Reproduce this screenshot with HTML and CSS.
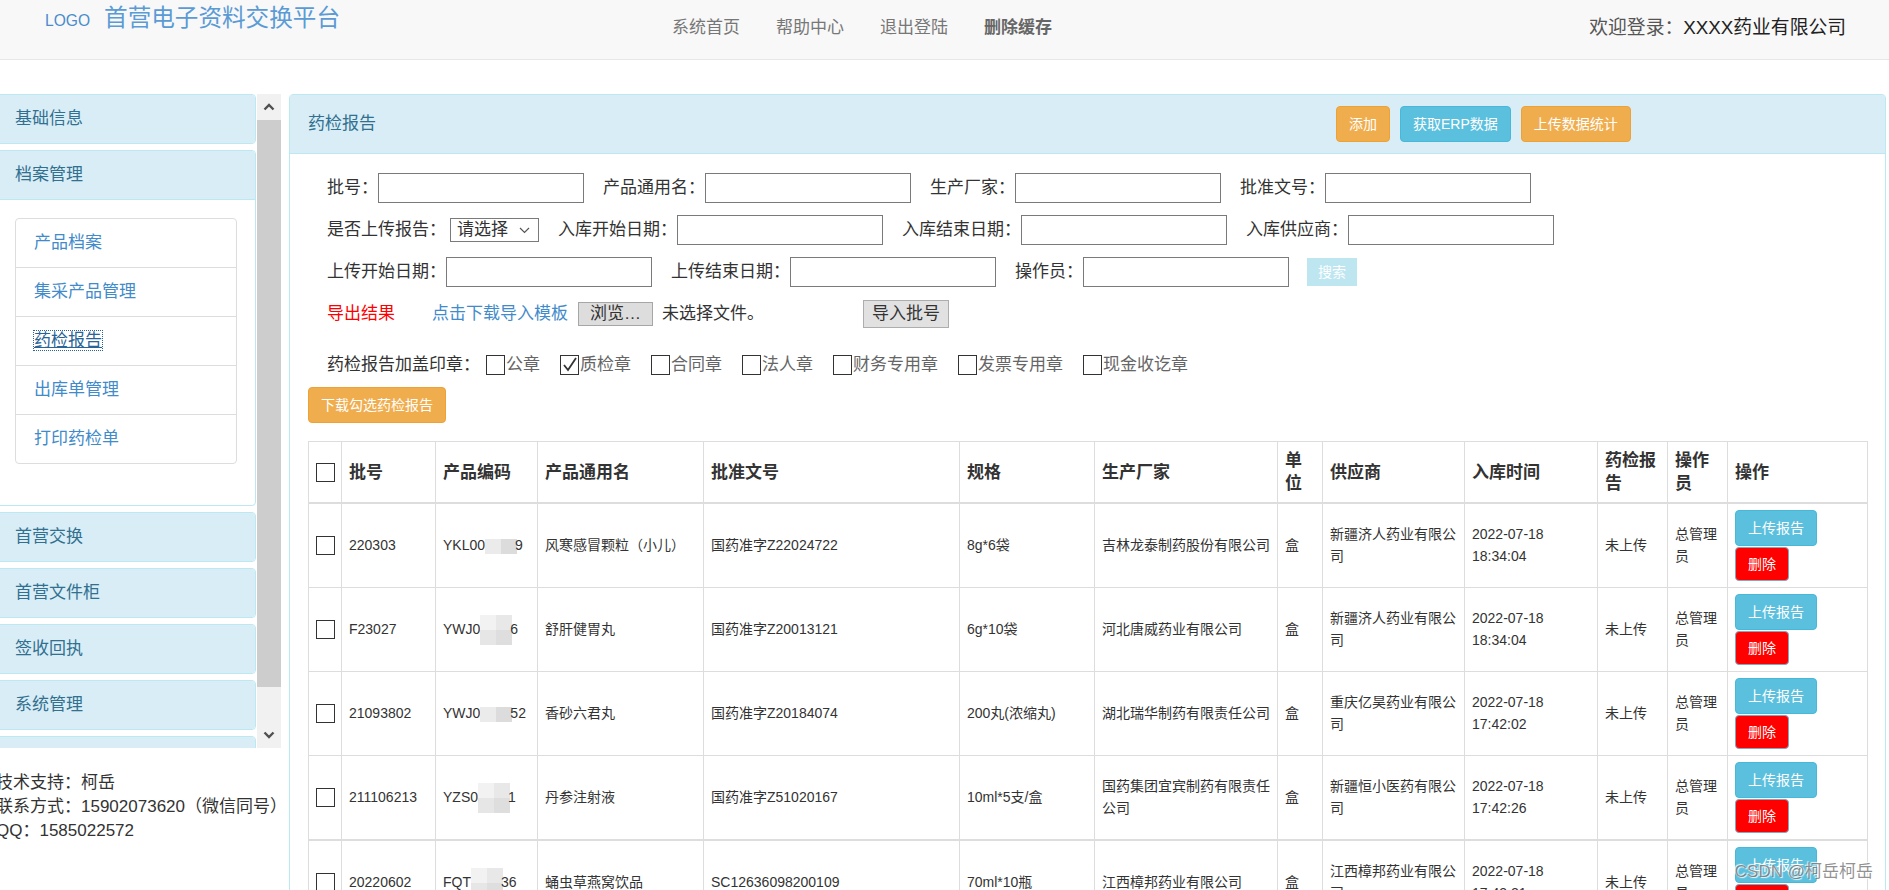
FILE: index.html
```html
<!DOCTYPE html>
<html lang="zh-CN">
<head>
<meta charset="utf-8">
<title>药检报告</title>
<link rel="stylesheet" href="styles.css">
</head>
<body>
<header class="topbar">
  <div class="brand"><span class="logo">LOGO</span><span class="site-title">首营电子资料交换平台</span></div>
  <nav class="topnav">
    <a class="topnav-link">系统首页</a>
    <a class="topnav-link">帮助中心</a>
    <a class="topnav-link">退出登陆</a>
    <a class="topnav-link topnav-strong">删除缓存</a>
  </nav>
  <div class="welcome"><span class="welcome-label">欢迎登录：</span>XXXX药业有限公司</div>
</header>

<div class="layout">
  <aside class="sidebar">
    <div class="side-scroll">
      <div class="side-panels">
        <div class="spanel"><div class="spanel-head">基础信息</div></div>
        <div class="spanel">
          <div class="spanel-head">档案管理</div>
          <div class="spanel-body">
            <ul class="list-group">
              <li class="list-item">产品档案</li>
              <li class="list-item">集采产品管理</li>
              <li class="list-item list-item-active"><span class="active-link">药检报告</span></li>
              <li class="list-item">出库单管理</li>
              <li class="list-item">打印药检单</li>
            </ul>
          </div>
        </div>
        <div class="spanel"><div class="spanel-head">首营交换</div></div>
        <div class="spanel"><div class="spanel-head">首营文件柜</div></div>
        <div class="spanel"><div class="spanel-head">签收回执</div></div>
        <div class="spanel"><div class="spanel-head">系统管理</div></div>
        <div class="spanel"><div class="spanel-head">&nbsp;</div></div>
      </div>
      <div class="scrollbar">
        <div class="sb-btn"><svg width="12" height="8" viewBox="0 0 12 8"><path d="M1.5 6.5 L6 2 L10.5 6.5" fill="none" stroke="#505050" stroke-width="2.4"/></svg></div>
        <div class="sb-thumb"></div>
        <div class="sb-track"></div>
        <div class="sb-btn"><svg width="12" height="8" viewBox="0 0 12 8"><path d="M1.5 1.5 L6 6 L10.5 1.5" fill="none" stroke="#505050" stroke-width="2.4"/></svg></div>
      </div>
    </div>
    <div class="side-foot">
      <p class="foot-line">技术支持：柯岳</p>
      <p class="foot-line">联系方式：15902073620（微信同号）</p>
      <p class="foot-line">QQ：1585022572</p>
    </div>
  </aside>

  <main class="panel">
    <div class="panel-head">
      <h3 class="panel-title">药检报告</h3>
      <div class="head-actions">
        <button class="btn btn-warning">添加</button>
        <button class="btn btn-info">获取ERP数据</button>
        <button class="btn btn-warning">上传数据统计</button>
      </div>
    </div>
    <div class="panel-body">
      <div class="frow">
        <span class="flabel">批号：</span><span class="finput"></span>
        <span class="flabel">产品通用名：</span><span class="finput"></span>
        <span class="flabel">生产厂家：</span><span class="finput"></span>
        <span class="flabel">批准文号：</span><span class="finput"></span>
      </div>
      <div class="frow">
        <span class="flabel">是否上传报告：</span>
        <span class="fselect"><span class="fselect-text">请选择</span><svg class="fselect-arrow" width="11" height="7" viewBox="0 0 11 7"><path d="M1 1 L5.5 5.5 L10 1" fill="none" stroke="#555" stroke-width="1.2"/></svg></span>
        <span class="flabel">入库开始日期：</span><span class="finput"></span>
        <span class="flabel">入库结束日期：</span><span class="finput"></span>
        <span class="flabel">入库供应商：</span><span class="finput"></span>
      </div>
      <div class="frow">
        <span class="flabel">上传开始日期：</span><span class="finput"></span>
        <span class="flabel">上传结束日期：</span><span class="finput"></span>
        <span class="flabel">操作员：</span><span class="finput finput-last"></span>
        <button class="btn btn-search">搜索</button>
      </div>
      <div class="frow frow-tools">
        <a class="export-link">导出结果</a>
        <a class="template-link">点击下载导入模板</a>
        <span class="file-btn">浏览…</span>
        <span class="file-none">未选择文件。</span>
        <span class="import-btn">导入批号</span>
      </div>
      <div class="frow frow-stamps">
        <span class="flabel">药检报告加盖印章：</span>
        <span class="stamp stamp-first"><span class="cbox"></span>公章</span>
        <span class="stamp"><span class="cbox"><svg width="17" height="18" viewBox="0 0 17 18"><path d="M3 9 L7 14 L15 2" fill="none" stroke="#333" stroke-width="1.8"/></svg></span>质检章</span>
        <span class="stamp"><span class="cbox"></span>合同章</span>
        <span class="stamp"><span class="cbox"></span>法人章</span>
        <span class="stamp"><span class="cbox"></span>财务专用章</span>
        <span class="stamp"><span class="cbox"></span>发票专用章</span>
        <span class="stamp"><span class="cbox"></span>现金收讫章</span>
      </div>
      <div class="download-row">
        <button class="btn btn-warning btn-download">下载勾选药检报告</button>
      </div>

      <table class="report-table">
        <colgroup>
          <col class="c-check"><col class="c-batch"><col class="c-code"><col class="c-name"><col class="c-approval"><col class="c-spec"><col class="c-maker"><col class="c-unit"><col class="c-supplier"><col class="c-time"><col class="c-report"><col class="c-operator"><col class="c-action">
        </colgroup>
        <thead>
          <tr>
            <th><span class="tbox"></span></th>
            <th>批号</th><th>产品编码</th><th>产品通用名</th><th>批准文号</th><th>规格</th><th>生产厂家</th><th>单位</th><th>供应商</th><th>入库时间</th><th>药检报告</th><th>操作员</th><th>操作</th>
          </tr>
        </thead>
        <tbody>
          <tr>
            <td><span class="tbox"></span></td>
            <td>220303</td>
            <td>YKL00<span class="mosaic m1"><i></i><i></i></span>9</td>
            <td>风寒感冒颗粒（小儿）</td>
            <td>国药准字Z22024722</td>
            <td>8g*6袋</td>
            <td>吉林龙泰制药股份有限公司</td>
            <td>盒</td>
            <td>新疆济人药业有限公司</td>
            <td>2022-07-18 18:34:04</td>
            <td>未上传</td>
            <td>总管理员</td>
            <td><div class="ops"><button class="btn btn-info btn-upload">上传报告</button><button class="btn btn-del">删除</button></div></td>
          </tr>
          <tr>
            <td><span class="tbox"></span></td>
            <td>F23027</td>
            <td>YWJ0<span class="mosaic m2"><i></i><i></i><i></i><i></i></span>6</td>
            <td>舒肝健胃丸</td>
            <td>国药准字Z20013121</td>
            <td>6g*10袋</td>
            <td>河北唐威药业有限公司</td>
            <td>盒</td>
            <td>新疆济人药业有限公司</td>
            <td>2022-07-18 18:34:04</td>
            <td>未上传</td>
            <td>总管理员</td>
            <td><div class="ops"><button class="btn btn-info btn-upload">上传报告</button><button class="btn btn-del">删除</button></div></td>
          </tr>
          <tr>
            <td><span class="tbox"></span></td>
            <td>21093802</td>
            <td>YWJ0<span class="mosaic m1"><i></i><i></i></span>52</td>
            <td>香砂六君丸</td>
            <td>国药准字Z20184074</td>
            <td>200丸(浓缩丸)</td>
            <td>湖北瑞华制药有限责任公司</td>
            <td>盒</td>
            <td>重庆亿昊药业有限公司</td>
            <td>2022-07-18 17:42:02</td>
            <td>未上传</td>
            <td>总管理员</td>
            <td><div class="ops"><button class="btn btn-info btn-upload">上传报告</button><button class="btn btn-del">删除</button></div></td>
          </tr>
          <tr>
            <td><span class="tbox"></span></td>
            <td>211106213</td>
            <td>YZS0<span class="mosaic m2"><i></i><i></i><i></i><i></i></span>1</td>
            <td>丹参注射液</td>
            <td>国药准字Z51020167</td>
            <td>10ml*5支/盒</td>
            <td>国药集团宜宾制药有限责任公司</td>
            <td>盒</td>
            <td>新疆恒小医药有限公司</td>
            <td>2022-07-18 17:42:26</td>
            <td>未上传</td>
            <td>总管理员</td>
            <td><div class="ops"><button class="btn btn-info btn-upload">上传报告</button><button class="btn btn-del">删除</button></div></td>
          </tr>
          <tr class="row-split">
            <td><span class="tbox"></span></td>
            <td>20220602</td>
            <td>FQT<span class="mosaic m2"><i></i><i></i><i></i><i></i></span>36</td>
            <td>蛹虫草燕窝饮品</td>
            <td>SC12636098200109</td>
            <td>70ml*10瓶</td>
            <td>江西樟邦药业有限公司</td>
            <td>盒</td>
            <td>江西樟邦药业有限公司</td>
            <td>2022-07-18 17:43:21</td>
            <td>未上传</td>
            <td>总管理员</td>
            <td><div class="ops"><button class="btn btn-info btn-upload">上传报告</button><button class="btn btn-del">删除</button></div></td>
          </tr>
        </tbody>
      </table>
    </div>
  </main>
</div>

<div class="watermark">CSDN @柯岳柯岳</div>
</body>
</html>
```

FILE: styles.css
```css
* { box-sizing: border-box; }

html, body {
  margin: 0;
  height: 100%;
  overflow: hidden;
}

body {
  position: relative;
  font-family: "Liberation Sans", "Noto Sans CJK SC", sans-serif;
  font-size: 17px;
  line-height: 24px;
  color: #333;
  background: #fff;
}

/* ---------- top bar ---------- */
.topbar {
  display: flex;
  height: 60px;
  background: #f8f8f8;
  border-bottom: 1px solid #e7e7e7;
}

.brand {
  flex: 0 0 654px;
  display: flex;
  align-items: baseline;
  padding: 1px 0 0 45px;
  line-height: 30px;
  height: 32px;
}

.logo {
  font-size: 15.6px;
  color: #4a8ccc;
  margin-right: 14px;
}

.site-title {
  font-family: "Noto Sans CJK SC", sans-serif;
  font-size: 23.6px;
  color: #5b9bd5;
}

.topnav {
  display: flex;
  align-self: flex-start;
  margin-top: 16px;
}

.topnav-link {
  padding: 0 18px;
  color: #777;
  text-decoration: none;
}

.topnav-strong {
  font-weight: bold;
  color: #666;
}

.welcome {
  margin-left: auto;
  align-self: flex-start;
  margin-top: 16px;
  padding-right: 43px;
  font-size: 18.8px;
  color: #222;
}

.welcome-label { color: #555; }

/* ---------- layout ---------- */
.layout {
  display: flex;
  align-items: flex-start;
  margin-top: 34px;
}

.sidebar {
  flex: 0 0 285px;
  width: 285px;
  min-width: 0;
  margin-left: -4px;
}

.side-scroll {
  display: flex;
  height: 654px;
}

.side-panels {
  width: 261px;
  height: 654px;
  overflow: hidden;
}

.spanel {
  width: 260px;
  border: 1px solid #bce8f1;
  border-radius: 4px;
  margin-bottom: 6px;
  background: #fff;
  overflow: hidden;
}

.spanel-head {
  height: 48px;
  display: flex;
  align-items: center;
  padding: 0 18px;
  background: #d9edf7;
  color: #31708f;
}

.spanel-body {
  border-top: 1px solid #bce8f1;
  padding: 18px 18px 17px;
}

.list-group {
  list-style: none;
  margin: 0 0 24px;
  padding: 0;
}

.list-item {
  padding: 12px 18px;
  border: 1px solid #ddd;
  margin-bottom: -1px;
  color: #428bca;
}

.list-item:first-child { border-radius: 4px 4px 0 0; }
.list-item:last-child { border-radius: 0 0 4px 4px; margin-bottom: 0; }

.active-link {
  color: #2a6496;
  text-decoration: underline;
  outline: 1px dotted #2a6496;
}

.scrollbar {
  flex: 0 0 24px;
  width: 24px;
  display: flex;
  flex-direction: column;
}

.sb-btn {
  height: 26px;
  background: #f1f1f1;
  display: flex;
  align-items: center;
  justify-content: center;
}

.sb-thumb {
  height: 567px;
  background: #cdcdcd;
}

.sb-track {
  height: 35px;
  background: #f1f1f1;
}

.side-foot {
  margin-top: 23px;
}

.foot-line {
  margin: 0;
  line-height: 24px;
  white-space: nowrap;
}

/* ---------- main panel ---------- */
.panel {
  flex: 1;
  min-width: 0;
  margin-left: 8px;
  margin-right: 3px;
  border: 1px solid #bce8f1;
  border-radius: 4px;
  min-height: 900px;
}

.panel-head {
  display: flex;
  align-items: center;
  height: 59px;
  padding: 0 18px;
  background: #d9edf7;
  border-bottom: 1px solid #bce8f1;
}

.panel-title {
  flex: 0 0 1028px;
  margin: 0;
  font-size: 17px;
  font-weight: normal;
  color: #31708f;
}

.head-actions {
  display: flex;
  gap: 10px;
}

.btn {
  font-family: "Liberation Sans", "Noto Sans CJK SC", sans-serif;
  font-size: 14px;
  line-height: 20px;
  height: 36px;
  padding: 0 12px;
  border: 1px solid transparent;
  border-radius: 4px;
  color: #fff;
  cursor: pointer;
}

.btn-warning { background: #f0ad4e; border-color: #eea236; }
.btn-info { background: #5bc0de; border-color: #46b8da; }

.panel-body {
  padding: 19px 18px 18px;
}

.frow {
  display: flex;
  align-items: center;
  height: 30px;
  margin-bottom: 12px;
  padding-left: 19px;
  white-space: nowrap;
}

.flabel { color: #333; }

.finput {
  width: 206px;
  height: 30px;
  margin-right: 19px;
  border: 1px solid #7a7a7a;
  background: #fff;
}

.finput-last { margin-right: 18px; }

.fselect {
  display: flex;
  align-items: center;
  justify-content: space-between;
  width: 89px;
  height: 24px;
  margin: 0 19px 0 4px;
  padding: 0 8px 0 6px;
  border: 1px solid #7a7a7a;
}

.fselect-arrow { flex: none; }

.btn-search {
  height: 28px;
  padding: 0 10px;
  background: #bde6f1;
  border-color: #bde6f1;
  border-radius: 0;
}

.frow-tools { margin-bottom: 21px; }

.export-link { color: #ff0000; margin-right: 37px; }
.template-link { color: #428bca; margin-right: 10px; }

.file-btn {
  height: 24px;
  line-height: 22px;
  padding: 0 11px;
  background: #dddddd;
  border: 1px solid #a6a6a6;
  margin-right: 9px;
}

.file-none { margin-right: 99px; }

.import-btn {
  height: 28px;
  line-height: 26px;
  padding: 0 8px;
  background: #e1e1e1;
  border: 1px solid #adadad;
}

.frow-stamps { margin-bottom: 7px; }

.stamp {
  display: flex;
  align-items: center;
  margin-left: 20px;
  color: #666;
}

.stamp-first { margin-left: 6px; }

.cbox {
  width: 19px;
  height: 20px;
  margin-right: 1px;
  border: 1px solid #333;
  background: #fff;
  display: flex;
  align-items: center;
  justify-content: center;
}

.download-row { margin-bottom: 18px; }

/* ---------- table ---------- */
.report-table {
  width: 100%;
  table-layout: fixed;
  border-collapse: collapse;
  border: 1px solid #ddd;
}

.c-check { width: 33px; }
.c-batch { width: 94px; }
.c-code { width: 102px; }
.c-name { width: 166px; }
.c-approval { width: 256px; }
.c-spec { width: 135px; }
.c-maker { width: 183px; }
.c-unit { width: 45px; }
.c-supplier { width: 142px; }
.c-time { width: 133px; }
.c-report { width: 70px; }
.c-operator { width: 60px; }
.c-action { width: 140px; }

.report-table th {
  padding: 7px 7px;
  border: 1px solid #ddd;
  border-bottom-width: 2px;
  font-size: 17px;
  line-height: 23px;
  font-weight: bold;
  text-align: left;
  vertical-align: middle;
}

.report-table td {
  padding: 6px 6px 6px 7px;
  border: 1px solid #ddd;
  font-size: 14px;
  line-height: 21.5px;
  vertical-align: middle;
}

.row-split td { border-top: 2px solid #ddd; }

.tbox {
  display: block;
  width: 19px;
  height: 19px;
  border: 1px solid #333;
  background: #fff;
}

.mosaic {
  display: inline-grid;
  grid-template-columns: 16px 16px;
  grid-auto-rows: 15px;
  vertical-align: middle;
  margin: -8px -2px -8px 0;
}

.mosaic i { display: block; }
.m1 i:nth-child(1) { background: #ebebeb; }
.m1 i:nth-child(2) { background: #dcdcdc; }
.m2 i:nth-child(1) { background: #f2f2f2; }
.m2 i:nth-child(2) { background: #e8e8e8; }
.m2 i:nth-child(3) { background: #e6e6e6; }
.m2 i:nth-child(4) { background: #dedede; }

.ops {
  display: flex;
  flex-direction: column;
  align-items: flex-start;
}

.btn-upload {
  height: 36px;
  padding: 0 12px;
}

.btn-del {
  height: 34px;
  margin-top: 1px;
  padding: 0 12px;
  background: #ff0000;
  border-color: #7ea9c6;
}

/* ---------- watermark ---------- */
.watermark {
  position: absolute;
  right: 16px;
  bottom: 8px;
  font-size: 17px;
  line-height: 20px;
  color: rgba(110, 110, 110, 0.75);
  text-shadow: 1px 1px 1px rgba(255, 255, 255, 0.9), -1px -1px 1px rgba(255, 255, 255, 0.9);
  white-space: nowrap;
}
```
